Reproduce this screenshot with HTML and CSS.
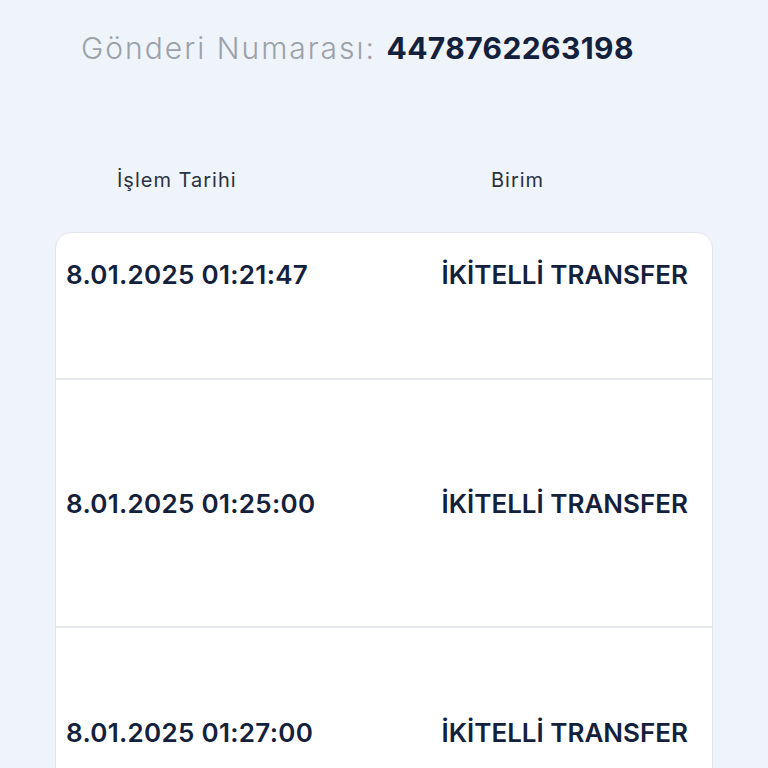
FILE: index.html
```html
<!DOCTYPE html>
<html lang="tr">
<head>
    <meta charset="UTF-8">
    <meta name="viewport" content="width=device-width, initial-scale=1.0">
    <title>Gönderi Takip</title>
    <link rel="stylesheet" href="styles.css">
</head>
<body>
    <h1 class="shipment-title">Gönderi Numarası: <span class="shipment-number">4478762263198</span></h1>

    <div class="table-head">
        <div class="head-date">İşlem Tarihi</div>
        <div class="head-unit">Birim</div>
    </div>

    <div class="movement-card">
        <div class="movement-row row-first">
            <div class="cell-date">8.01.2025 01:21:47</div>
            <div class="cell-unit">İKİTELLİ TRANSFER</div>
        </div>
        <div class="movement-row row-middle">
            <div class="cell-date">8.01.2025 01:25:00</div>
            <div class="cell-unit">İKİTELLİ TRANSFER</div>
        </div>
        <div class="movement-row row-last">
            <div class="cell-date">8.01.2025 01:27:00</div>
            <div class="cell-unit">İKİTELLİ TRANSFER</div>
        </div>
    </div>
</body>
</html>
```

FILE: styles.css
```css
body {
    font-family: Inter, "Noto Sans", sans-serif;
    background-color: #eff3fa;
    color: #14213d;
    margin: 0;
    padding: 0 55px;
    overflow: hidden;
}
.shipment-title {
    font-size: 30px;
    font-weight: 300;
    letter-spacing: 2px;
    color: #9ba1ab;
    margin: 0;
    padding: 30px 0 0 26px;
    line-height: 36px;
    white-space: nowrap;
}
.shipment-number {
    font-weight: 700;
    letter-spacing: 0.4px;
    color: #14213d;
}
.table-head {
    display: flex;
    font-size: 20px;
    letter-spacing: 1px;
    color: #2a3242;
    margin-top: 102px;
    line-height: 24px;
}
.head-date {
    padding-left: 62px;
    width: 374px;
}
.movement-card {
    background-color: #fff;
    border: 1px solid #e2e6ec;
    border-radius: 16px;
    margin-top: 40px;
}
.movement-row {
    display: flex;
    align-items: center;
    padding: 0 24px 0 10px;
    border-bottom: 2px solid #e4e7ec;
    font-size: 26px;
    font-weight: 600;
}
.cell-date {
    flex: 1;
    letter-spacing: 0.3px;
}
.row-first {
    height: 147px;
    align-items: flex-start;
    padding-top: 26px;
    box-sizing: border-box;
}
.row-middle {
    height: 246px;
}
.row-last {
    height: 246px;
    align-items: flex-start;
    padding-top: 89px;
    box-sizing: border-box;
    border-bottom: none;
}
```
